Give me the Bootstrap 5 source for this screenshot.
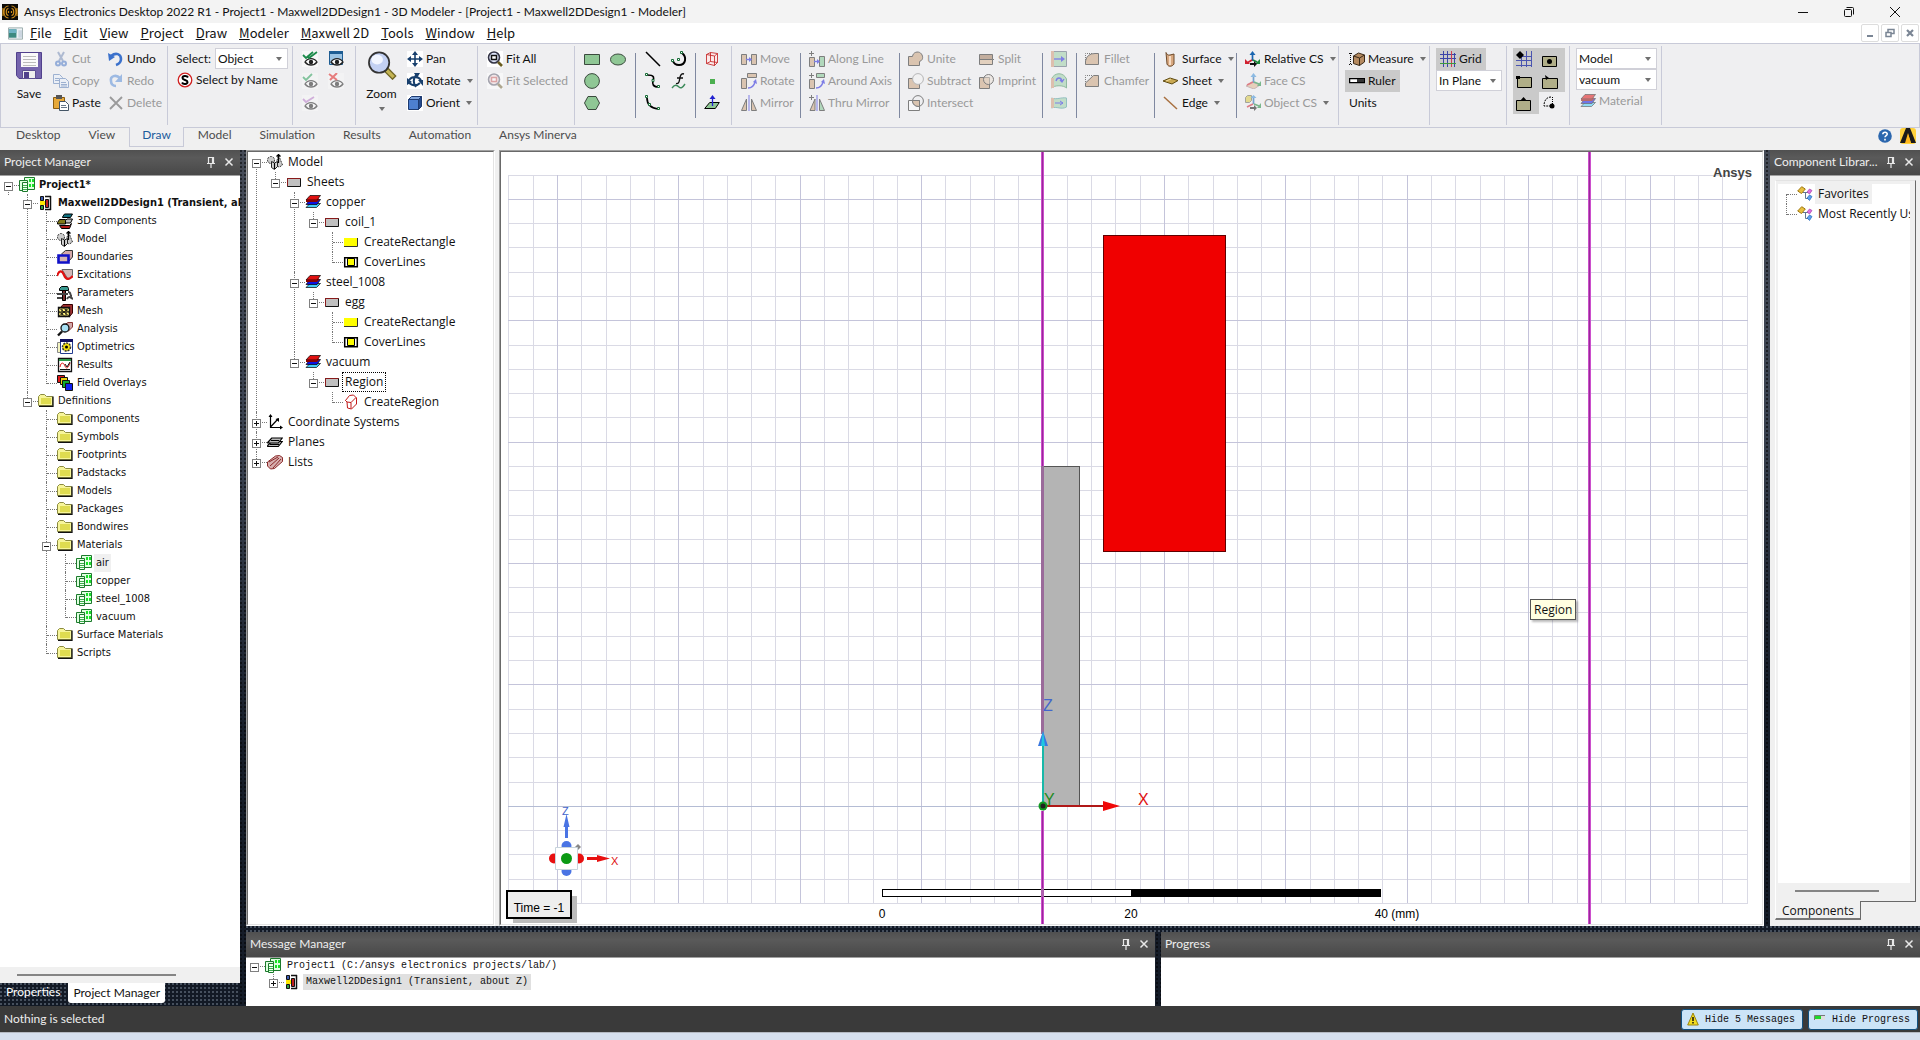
<!DOCTYPE html>
<html lang="en">
<head>
<meta charset="utf-8">
<meta name="viewport" content="width=device-width, initial-scale=1">
<title>Ansys Electronics Desktop 2022 R1</title>
<link href="https://cdn.jsdelivr.net/npm/bootstrap@5.3.0/dist/css/bootstrap.min.css" rel="stylesheet">
<style>
:root{--ui:Lato,"Open Sans",sans-serif;--line:#c8cad8}
body{font:12px/18px var(--ui);color:#111;background:#f0f0f0;height:100vh;overflow:hidden}
button,select{font:inherit;color:inherit}
button{background:none;border:0;padding:0;text-align:left;white-space:nowrap}
svg{display:block;flex:none}
.ic{width:16px;height:16px}
a{color:inherit;text-decoration:none}
/* title and menu */
.titlebar{height:23px;background:#f3f3f3;padding:0 18px 0 2px;gap:6px}
.winbtns{gap:32px}
.menubar{height:20px;background:#fff;padding:0 1px 0 8px;font:13px/18px "Noto Sans CJK SC","Open Sans",sans-serif}
.menus{gap:12px;padding-left:7px}
.mdi{gap:2px}
.mdi button{width:18px;height:18px;border:1px solid #ddd;border-radius:2px;display:grid;place-items:center}
/* ribbon */
.ribbon{border:1px solid var(--line);background:#efeff1;height:85px}
.grp{display:grid;margin:2px 0;padding-top:2px;border-right:1px solid var(--line);align-content:start;box-sizing:content-box}
.rcol{display:flex;flex-direction:column;align-items:flex-start;min-width:0}
.pl8{padding-left:8px}.pl9{padding-left:9px}
.pbox{padding:0 4px 0 6px}
.rb{height:22px;display:flex;align-items:center;gap:3px}
.rb.dis{color:#999}.rb.dis svg{opacity:.55}
.big{display:flex;flex-direction:column;align-items:center;padding-top:3px}
.big span{line-height:27px}
.caret::after,.pick::after{content:"";border:3px solid transparent;border-top:4px solid #707070;border-bottom:0;margin-left:3px}
.big.caret::after{margin:0}
.vsep{width:1px;height:65px;margin-top:5px;background:#7f88a0}
.pick{position:relative;display:block;height:21px}
.pick::after{position:absolute;right:6px;top:9px;pointer-events:none}
.pick select{appearance:none;width:100%;height:100%;border:1px solid #d0d0d8;background:#fff;padding:0 0 0 2px;border-radius:0;display:block}
.on{background:#cacaca}
.g-clip{grid-template-columns:52px 55px 59px}
.g-sel{grid-template-columns:124px}
.g-vis{grid-template-columns:35px 27px}
.g-zoom{grid-template-columns:51px 70px}
.g-fit{grid-template-columns:96px}
.g-prim{grid-template-columns:35px 25px 1px 35px 24px 1px 35px}
.g-edit{grid-template-columns:68px 1px 98px 1px 79px 63px 1px 33px 1px 77px 1px 81px 1px 101px}
.g-meas{grid-template-columns:90px}
.g-grid{grid-template-columns:76px}
.g-snap{grid-template-columns:26px 26px;padding:2px 4px 0 6px}
.g-snap button{width:26px;height:22px;padding-left:3px}
.g-mat{grid-template-columns:91px}
.rtabs{height:22px;color:#4d4d4d;padding-left:2px}
.rtabs button{padding:0 14px;height:19px;line-height:14px;display:flex}
.rtabs .sel{background:#efeff1;border:1px solid var(--line);border-top:0;color:#1b5c9c;padding:1px 12px 0;margin-top:-1px;height:20px}
/* docking area */
.dock{min-height:0;background-color:#151c28;background-image:radial-gradient(circle at 1px 1px,#0008 1px,transparent 1px),linear-gradient(#454b57,#3a4250 35%,#151c28 70%);background-size:4px 4px,100% 100%}
.work{margin-left:6px;min-width:0}
.hsplit{height:6px}
.hsplit,.tabstrip{background:#121925 radial-gradient(circle at 1px 1px,#46505e 1px,transparent 1px) 0 0/4px 4px}
.tabstrip{height:23px;gap:8px;padding-left:6px}
.side{width:240px}
.lib{width:150px;margin-left:6px;background:#f0f0f0}
.phead{height:26px;background:linear-gradient(#505050,#5a5a5a 30%,#484848);border-bottom:1px solid #a0a0a0;color:#eee;padding:0 2px 1px 4px}
.phead .ttl{flex:1;white-space:nowrap}
.phead .ic{width:18px}
.sunk{border:1px solid #a0a0a0;border-right-color:#fff;border-bottom-color:#fff}
.sunk>.in{border:1px solid #696969;border-right-color:#e3e3e3;border-bottom-color:#e3e3e3;background:#fff;overflow:hidden}
.mtree{width:249px}
.gap-bar{width:4px;background:#f0f0f0}
.thumb{height:2px;background:#858585}
.hscroll{height:16px;background:#f0f0f0;padding:7px 64px 0 17px}
.hscroll.narrow{height:18px;padding:7px 36px 0 19px}
/* trees */
.tree,.tree ul{list-style:none;margin:0;padding:0}
.tree{overflow:hidden}
.tree ul{padding-left:19px}
.tree li{position:relative}
.tree li::before{content:"";position:absolute;left:8px;top:0;bottom:0;border-left:1px dotted #777}
.tree li:last-child::before{bottom:auto;height:calc(var(--rh)/2 + 1px)}
.tree>li:first-child::before{top:calc(var(--rh)/2)}
.tree.solo>li::before{display:none}
.row-t{position:relative;height:var(--rh);display:flex;align-items:center;white-space:nowrap}
.row-t::before{content:"";position:absolute;left:9px;width:10px;top:50%;border-top:1px dotted #777}
.tg{position:relative;flex:none;width:9px;height:9px;margin:2px 6px 0 4px;border:1px solid #808080;background:linear-gradient(#111,#111) center/5px 1px no-repeat #fff}
.tg.plus{background:linear-gradient(#111,#111) center/5px 1px no-repeat,linear-gradient(#111,#111) center/1px 5px no-repeat,#fff}
.leaf{flex:none;width:19px}
.row-t span{margin-left:2px;padding:0 3px;line-height:var(--rh)}
.row-t .hl{background:#f0f0f0}
.row-t .foc{outline:1px dotted #000;outline-offset:-1px}
.t-proj{--rh:18px;font-family:"DejaVu Sans Condensed","DejaVu Sans",sans-serif;font-size:11px}
.t-proj .row-t span{padding:0 2px}
.t-model{--rh:20px;font-family:"Open Sans","Noto Sans",sans-serif}
.t-msg{--rh:16px;font-family:"Liberation Mono",monospace;font-size:10px}
.t-msg .row-t span{margin-left:3px}
.t-msg .row-t .hl{background:#e0e0e0}
.ptab{height:20px;background:#fff;border-radius:0 0 3px 3px;padding:0 5px}
.libframe{margin:4px 4px 0 5px;border-left:1px solid #fff;border-top:1px solid #e3e3e3;border-right:1px solid #696969}
.libtree{margin:3px 5px 0 2px;background:#fff}
.libfoot{height:25px}
.libtab{border:1px solid #fff;border-right-color:#696969;border-bottom:2px solid #777;border-top:0;height:19px;padding:2px 6px 0;margin-left:5px;font:12px/16px "Open Sans",sans-serif}
.libedge{border-top:1px solid #696969;height:2px;margin-right:4px}
.bottom{height:74px}
.progress-pane{width:759px;margin-left:6px}
.status{height:26px;background:#3a3a3a;color:#eee;padding:0 2px 0 4px}
.stbtns{gap:5px}
.stbtn{height:21px;border:1px solid #11507f;border-radius:3px;background:#cce4f7;color:#111;font:10px "Liberation Mono",monospace;padding:0 7px 0 5px;display:flex;align-items:center;gap:6px}
.strip{height:8px;background:#d6dfee;border-top:1px solid #b5b9c2}
.tip{position:absolute;left:1029px;top:447px;border:1px solid #555;background:#ffffe1;padding:0 3px;font-family:"Open Sans",sans-serif;line-height:19px;box-shadow:2px 2px 2px #0004}
.scene text{font-family:"Liberation Sans",sans-serif}
</style>
<script src="https://cdn.jsdelivr.net/npm/bootstrap@5.3.0/dist/js/bootstrap.bundle.min.js"></script>
</head>
<body class="d-flex flex-column">

<svg width="0" height="0" class="position-absolute" aria-hidden="true"><defs>
<symbol id="app" viewBox="0 0 16 16"><path fill="#0c0a06" d="M0 0h16v16H0z"/><g fill="none" stroke="#c98a1b" stroke-width="1.200"><path d="M6.500 2C.5 2 .5 14 6.500 14M9.500 2c6 0 6 12 0 12M6.500 4.500c-3 0-3 7 0 7M9.500 4.500c3 0 3 7 0 7M6.500 7v2M9.500 7v2M1 4v8M15 4v8"/></g></symbol>
<symbol id="doc" viewBox="0 0 16 13"><path fill="#eef3f6" stroke="#9aa" d="M.5.5h15v12H.5z"/><path fill="#3d8a80" d="M1 2h8v9H1z"/><path fill="#6fb3c4" d="M1 2h8v4H1z"/><path fill="#ccd6e0" d="M11 3h4v8h-4z"/></symbol>
<symbol id="save" viewBox="0 0 26 27"><path fill="#7564ad" stroke="#51418c" d="M.5.5h25v26H3l-2.500-3z"/><path fill="#fafafa" d="M5 1h17v14H5z"/><path stroke="#bbb" d="M7 4.500h13M7 7.500h13M7 10.500h13M7 13.500h13"/><path fill="#eee" stroke="#5d4f92" d="M6.500 18.500h13v8h-13z"/><path fill="#51418c" d="M8 20h5v6H8z"/></symbol>
<symbol id="cut" viewBox="0 0 16 16"><path stroke="#7a8fb8" stroke-width="2" d="M5 1l5 9M11 1L6 10"/><g fill="none" stroke="#4d79c7" stroke-width="2"><circle cx="5" cy="12.500" r="2"/><circle cx="11" cy="12.500" r="2"/></g></symbol>
<symbol id="copy" viewBox="0 0 16 16"><path fill="#e8f0fb" stroke="#5b7fb8" d="M.5 1.500h6l3 3v6h-9z"/><path fill="#e8f0fb" stroke="#5b7fb8" d="M6.500 5.500h6l3 3v6h-9z"/><path stroke="#5b7fb8" d="M2 5.500h4M2 7.500h4M8 9.500h5M8 11.500h6M8 13h6"/></symbol>
<symbol id="paste" viewBox="0 0 16 16"><path fill="#e7a93a" stroke="#8a5d12" d="M.5 2.500h11v11H.5z"/><path fill="#555" d="M3 0h6v4H3z"/><path fill="#fff" stroke="#456" d="M6.500 6.500h6l3 3v6h-9z"/><path stroke="#678" d="M8 10.500h5M8 12.500h6"/></symbol>
<symbol id="undo" viewBox="0 0 16 16"><path fill="none" stroke="#3c72cc" stroke-width="2.600" d="M3 5c5-4 10-2 10 3 0 3-2 5-5 6"/><path fill="#3c72cc" d="M0 2l1 8 6-4z"/></symbol>
<symbol id="redo" viewBox="0 0 16 16"><path fill="none" stroke="#5b8fd8" stroke-width="2.600" d="M12 5C8 1 2 3 3 8c0 3 2 5 5 5"/><path fill="#5b8fd8" d="M14 1v8H7z"/></symbol>
<symbol id="del" viewBox="0 0 16 16"><path stroke="#555" stroke-width="1.800" d="M2 2l12 12M14 2L2 14"/></symbol>
<symbol id="selname" viewBox="0 0 16 16"><circle cx="8" cy="8" r="6.800" fill="#fff" stroke="#d02020" stroke-width="1.300"/><path fill="none" stroke="#000" stroke-width="2" d="M11 5.500C10 3.500 5.500 3.500 5.500 6S10.500 7.500 10.500 10 6 12.500 5 10.500"/></symbol>
<symbol id="eye" viewBox="0 0 16 16"><path fill="#fff" stroke="#222" stroke-width="1.300" d="M3 11c3-4.500 9-4.500 12 0-3 4-9 4-12 0z"/><circle cx="9" cy="11" r="2.200" fill="#222"/></symbol>
<symbol id="eyeg" viewBox="0 0 16 16"><path fill="#f7f7f7" d="M0 0h16v16H0z"/><use href="#eye"/><path fill="none" stroke="#1b8a4a" stroke-width="1.800" d="M1 4l3 3 7-6M5 5l2 2 8-6"/></symbol>
<symbol id="eyew" viewBox="0 0 16 16"><path fill="#9cc4e4" stroke="#1e5d93" d="M1.500.5h13v13h-13z"/><path fill="#1e5d93" d="M1 0h14v3H1z"/><use href="#eye"/></symbol>
<symbol id="eyec" viewBox="0 0 16 16"><path fill="#f7f7f7" d="M0 0h16v16H0z"/><use href="#eye"/><path fill="none" stroke="#2aa05a" stroke-width="1.800" d="M1 4l3 3 6-6"/></symbol>
<symbol id="eyex" viewBox="0 0 16 16"><path fill="#f7f7f7" d="M0 0h16v16H0z"/><use href="#eye"/><path stroke="#e02020" stroke-width="2" d="M1 1l8 6M9 0L2 7"/></symbol>
<symbol id="eyep" viewBox="0 0 16 16"><path fill="#f7f7f7" d="M0 0h16v16H0z"/><use href="#eye"/><path fill="none" stroke="#b87bc8" stroke-width="1.800" d="M1 4l3 3 8-5"/></symbol>
<symbol id="zoomi" viewBox="0 0 30 30"><path stroke="#6e6424" stroke-width="6" d="M18 18l10 10"/><path stroke="#c4b454" stroke-width="3.500" d="M20 20l7 7"/><circle cx="12" cy="12" r="10.500" fill="#c3d1f3" stroke="#333" stroke-width="1.800"/><ellipse cx="10" cy="9" rx="6" ry="5" fill="#f2f6ff"/></symbol>
<symbol id="pan" viewBox="0 0 16 16"><path fill="#fff" d="M0 0h16v16H0z"/><path stroke="#173f6d" stroke-width="1.600" d="M8 2v12M2 8h12"/><path fill="#173f6d" d="M8 0l3 4H5zM8 16l3-4H5zM0 8l4-3v6zM16 8l-4-3v6z"/></symbol>
<symbol id="rot" viewBox="0 0 16 16"><path fill="#fff" d="M0 0h16v16H0z"/><path fill="none" stroke="#173f6d" stroke-width="2" d="M2 7c3-4 9-4 12 0M9 2c-3 4-3 8 0 12M2 10c4 3 8 3 11 0"/><path fill="#173f6d" d="M0 5l5 4-5 3zM7 0h6l-3 5zM11 7h5v6z"/></symbol>
<symbol id="cube" viewBox="0 0 16 16"><path fill="#fff" d="M0 0h16v16H0z"/><path fill="#7fa4dc" stroke="#1d3a70" d="M1.500 4.500l3-3h10l-3 3z"/><path fill="#24498c" stroke="#1d3a70" d="M11.500 4.500l3-3v10l-3 3z"/><path fill="#4d7fd0" stroke="#1d3a70" d="M1.500 4.500h10v10h-10z"/></symbol>
<symbol id="fit" viewBox="0 0 16 16"><path fill="#fff" d="M0 0h16v16H0z"/><circle cx="7" cy="6.500" r="5.500" fill="#dfe6fb" stroke="#334" stroke-width="1.600"/><path fill="#fff" stroke="#111" stroke-width="1.500" d="M4.500 4.500h5v4h-5z"/><path stroke="#6a5c20" stroke-width="2.600" d="M11 11l4 4"/></symbol>
<symbol id="fits" viewBox="0 0 16 16"><path fill="#fff" d="M0 0h16v16H0z"/><circle cx="7" cy="6.500" r="5.500" fill="#f4dfe2" stroke="#667" stroke-width="1.600"/><path fill="#fff" stroke="#c66" stroke-width="1.500" d="M4.500 4.500h5v4h-5z"/><path stroke="#7a6c40" stroke-width="2.600" d="M11 11l4 4"/></symbol>
<symbol id="rect" viewBox="0 0 16 16"><path fill="#8fc795" stroke="#3b4a3e" d="M.5 3.500h15v10H.5z"/></symbol>
<symbol id="ell" viewBox="0 0 16 16"><ellipse cx="8" cy="8.500" rx="7.500" ry="5.500" fill="#8fc795" stroke="#3b4a3e"/></symbol>
<symbol id="circ" viewBox="0 0 16 16"><circle cx="8" cy="8" r="7.400" fill="#8fc795" stroke="#3b4a3e"/></symbol>
<symbol id="hex" viewBox="0 0 16 16"><path fill="#8fc795" stroke="#3b4a3e" d="M4 1.500h8l3.500 6.500-3.500 6.500H4L.5 8z"/></symbol>
<symbol id="ln" viewBox="0 0 16 16"><path stroke="#000" stroke-width="1.500" d="M1 1l14 14"/></symbol>
<symbol id="arc3" viewBox="0 0 16 16"><path fill="none" stroke="#000" stroke-width="2" d="M11 2c5 4 4 12-3 12-3 0-5-1-6-4"/><path fill="#fff" stroke="#156a35" d="M9.500.5h2v2h-2zM.5 8.500h2v2h-2zM6.500 7.500h2v2h-2z"/></symbol>
<symbol id="spl" viewBox="0 0 16 16"><path fill="none" stroke="#000" stroke-width="1.700" d="M2 2c8 0 7 3 6 6s0 6 6 6"/><path fill="#fff" stroke="#156a35" d="M.5.5h2v2h-2zM7 6.500h2v2H7zM12.500 12.500h2v2h-2z"/></symbol>
<symbol id="arcc" viewBox="0 0 16 16"><path fill="none" stroke="#000" stroke-width="1.700" d="M2 3c0 6 4 10 11 11"/><path fill="#fff" stroke="#156a35" d="M.5.5h2v2h-2zM3.500 8.500h2v2h-2zM12.500 12.500h2v2h-2z"/></symbol>
<symbol id="eqn" viewBox="0 0 16 16"><path fill="none" stroke="#111" stroke-width="1.400" d="M13 1c-3-1-4 2-4.500 6C8 10 7 11 5 10.500M6 5h6"/><path fill="none" stroke="#3c8a5a" stroke-width="1.400" d="M1 15c3-4 5-3 7-1s4 0 6-3"/></symbol>
<symbol id="regn" viewBox="0 0 16 16"><path fill="#fbe9e9" stroke="#c01818" stroke-width=".8" d="M2.500 3.500l4-2 7 1v9l-3 3-8-2zM2.500 3.500l8 1.500v9.500M10.500 5l3-2.500M2.500 12.500l4-2 7 1M6.500 1.500v9"/></symbol>
<symbol id="regt" viewBox="0 0 16 16"><path fill="#fff" stroke="#c01818" d="M2.500 6.500l4-5 4-.500 3 3v6l-5 5-4-1-.500-6zM4 8l4 .5v6M8 8.500l5-5M2.500 6.500L4 8"/></symbol>
<symbol id="pnt" viewBox="0 0 16 16"><path fill="#4caf50" d="M6 6h5v5H6z"/></symbol>
<symbol id="plane" viewBox="0 0 16 16"><path fill="#8fc795" stroke="#000" d="M.7 13.500l5-6h9.600l-4 6z"/><path stroke="#2222d0" stroke-width="1.300" d="M8.500 2v9"/><path fill="#2222d0" d="M8.500 0l3 4h-6z"/></symbol>
<symbol id="mv" viewBox="0 0 16 16"><path fill="#c9a27c" stroke="#222" d="M.5 3.500h5v10h-5zM10.500 3.500h5v10h-5z"/><path stroke="#22d" stroke-width="1.400" d="M5 8.500h4"/><path fill="#22d" d="M8 6l3 2.500L8 11z"/></symbol>
<symbol id="ro" viewBox="0 0 16 16"><path fill="#c9a27c" stroke="#222" d="M.5 5.500h5v10h-5zM6.500.5h9v4h-9z"/><path fill="none" stroke="#22d" stroke-width="1.400" d="M7 15c4 0 6-2 7-6"/><path fill="#22d" d="M12 9l3-3 1 5z"/></symbol>
<symbol id="mi" viewBox="0 0 16 16"><path fill="#c9a27c" stroke="#222" d="M5.500 4v11.500h-5zM10.500 4v11.500h5z"/><path stroke="#22d" d="M8 0v16"/></symbol>
<symbol id="mv2" viewBox="0 0 16 16"><path fill="#c9a27c" stroke="#222" d="M.5 6.500h5v9h-5z"/><path fill="#7fc792" stroke="#222" d="M10.500 5.500h5v10h-5z"/><path stroke="#22d" stroke-width="1.400" d="M5 10.500h4"/><path fill="#22d" d="M8 8l3 2.500L8 13z"/><path stroke="#222" d="M2.500 0v5M0 2.500h5"/></symbol>
<symbol id="ro2" viewBox="0 0 16 16"><path fill="#c9a27c" stroke="#222" d="M.5 6.500h5v9h-5z"/><path fill="#7fc792" stroke="#222" d="M7.500.5h8v4h-8z"/><path fill="none" stroke="#22d" stroke-width="1.400" d="M7 15c4 0 6-2 7-6"/><path fill="#22d" d="M12 9l3-3 1 5z"/><path stroke="#222" d="M2.500 0v5M0 2.500h5"/></symbol>
<symbol id="mi2" viewBox="0 0 16 16"><path fill="#c9a27c" stroke="#222" d="M6 4v11.500H1z"/><path fill="#7fc792" stroke="#222" d="M10.500 4v11.500h5z"/><path stroke="#22d" d="M8 0v16"/><path stroke="#222" d="M2.500 0v5M0 2.500h5"/></symbol>
<symbol id="uni" viewBox="0 0 16 16"><path fill="#c9a27c" stroke="#222" d="M.5 5.500h4C5 1 10 0 12.500 2S16 9 11.500 10.500v4H.5z"/></symbol>
<symbol id="subt" viewBox="0 0 16 16"><path fill="#c9a27c" stroke="#222" d="M.5 5.500h11v10H.5z"/><circle cx="10" cy="6" r="5.400" fill="#f4f4f4" stroke="#888"/></symbol>
<symbol id="inter" viewBox="0 0 16 16"><path fill="#fff" stroke="#222" d="M.5 5.500h11v10H.5z"/><circle cx="10" cy="6" r="5.400" fill="none" stroke="#222"/><path fill="#c9a27c" stroke="#222" d="M4.500 5.500h7v6c-4 0-7-2-7-6z"/></symbol>
<symbol id="split" viewBox="0 0 16 16"><path fill="#a07a5c" stroke="#222" d="M.5 3.500h13v5H.5z"/><path fill="#d9b795" stroke="#222" d="M.5 8.500h13v5H.5z"/><path stroke="#222" stroke-dasharray="1 1" d="M0 8.500h16"/></symbol>
<symbol id="impr" viewBox="0 0 16 16"><path fill="#c9a27c" stroke="#222" d="M.5 4.500h10v11H.5z"/><circle cx="9.500" cy="6.500" r="5" fill="#e8d4c0" fill-opacity=".5" stroke="#222"/></symbol>
<symbol id="sw1" viewBox="0 0 16 16"><path fill="#9cd0a8" stroke="#567" d="M.5.5h15v15H.5z"/><path fill="#d09878" d="M0 0h3v16H0z"/><path stroke="#22d" stroke-width="1.300" d="M3 8h9"/><path fill="#22d" d="M10 5l4 3-4 3z"/></symbol>
<symbol id="sw2" viewBox="0 0 16 16"><path fill="#9cd0a8" stroke="#469060" d="M.5 6c3-7 12-7 15 0v9c-3-3-12-3-15 0z"/><path fill="#d09878" d="M0 5h3v10H0z"/><path fill="none" stroke="#22d" stroke-width="1.300" d="M5 8c1-4 5-4 6 0M9 7l2 2 2-3"/></symbol>
<symbol id="sw3" viewBox="0 0 16 16"><path fill="#9cd0a8" stroke="#4a9a9a" d="M.5 3c5 2 10-1 15 0v9c-5 3-10-1-15 1z"/><path fill="#d09878" d="M0 3h3v10H0z"/><path fill="none" stroke="#22d" d="M4 8h8M9 6l3 2-3 2"/></symbol>
<symbol id="fil" viewBox="0 0 16 16"><path fill="#c9a27c" stroke="#222" d="M.5 13.500V10Q2 2.500 10 2.500h3.500v11z"/><path fill="none" stroke="#222" stroke-dasharray="1 1" d="M.5 9V2.500H8"/></symbol>
<symbol id="cha" viewBox="0 0 16 16"><path fill="#c9a27c" stroke="#222" d="M.5 13.500V10l8-7.500h5v11z"/><path fill="none" stroke="#222" stroke-dasharray="1 1" d="M.5 9V2.500H8"/></symbol>
<symbol id="surf" viewBox="0 0 16 16"><path fill="#d8a880" stroke="#6d4a2a" d="M3 1.500c1 2 2 3 4 2.500l4-1v10c-2 3-6 3-7 0z"/><path fill="#f6dcc4" d="M6 5h2v9H6z"/></symbol>
<symbol id="sheet" viewBox="0 0 16 16"><path fill="#c9a852" stroke="#5e4a12" d="M0 8l7-3 8 2.500L9 11z"/><path stroke="#f0dca0" d="M3 8l5-2"/></symbol>
<symbol id="edge" viewBox="0 0 16 16"><path stroke="#a87040" stroke-width="1.500" d="M1 2l13 12"/></symbol>
<symbol id="rcs" viewBox="0 0 16 16"><path stroke="#1a66b0" stroke-width="1.700" d="M7.500 2v8"/><path fill="#1a66b0" d="M7.500 0l3 4h-6z"/><path stroke="#d02030" stroke-width="1.700" d="M7 9l-5 3"/><path fill="#d02030" d="M0 8v5h5z"/><path stroke="#1b8a3a" stroke-width="1.700" d="M8 9l4 2"/><path fill="#1b8a3a" d="M15 8v5h-5z"/><path fill="#111" d="M5 12h4v-2l3 3-3 3v-2H5z"/></symbol>
<symbol id="fcs" viewBox="0 0 16 16"><path fill="#e0b890" stroke="#a88" d="M1 13l6-4 8 3-6 4z"/><path stroke="#1a66b0" stroke-width="1.700" d="M8.500 2v8"/><path fill="#3c90d8" d="M8.500 0l3 4h-6z"/><path stroke="#d02030" stroke-width="1.700" d="M8 9l-6 3"/><path stroke="#1b8a3a" stroke-width="1.700" d="M9 9l5 2"/><path fill="#1b8a3a" d="M16 8v5h-4z"/></symbol>
<symbol id="ocs" viewBox="0 0 16 16"><path fill="#d8c840" stroke="#665" d="M.5 2.500l2-2h4v5l-2 2h-4z"/><path stroke="#1a66b0" stroke-width="1.700" d="M8.500 2v7"/><path fill="#3c90d8" d="M8.500 0l3 3h-6z"/><path stroke="#d02030" stroke-width="1.700" d="M8 9l-6 3"/><path stroke="#1b8a3a" stroke-width="1.700" d="M9 9l5 2"/><path fill="#1b8a3a" d="M16 8v5h-4z"/><path fill="#111" d="M5 12h4v-2l3 3-3 3v-2H5z"/></symbol>
<symbol id="meas" viewBox="0 0 16 16"><path stroke="#111" stroke-dasharray="1 1" d="M1.500 2v12M0 2.500h4M0 13.500h4"/><path fill="#b58a60" stroke="#3a2a18" d="M4.500 5l5-3 6 2v7l-5 3.500-6-2z"/><path fill="none" stroke="#3a2a18" d="M4.500 5l6 2v7.500M10.500 7l5-3"/></symbol>
<symbol id="ruler" viewBox="0 0 16 16"><path fill="#fff" stroke="#000" stroke-width="1.300" d="M.6 5.600h14.800v4H.6z"/><path fill="#333" d="M8 6h7v3H8z"/></symbol>
<symbol id="gridi" viewBox="0 0 16 16"><path stroke="#3b45a8" d="M3.500 0v16M7.500 0v16M14.500 2v14M0 3.500h16M0 7.500h16"/><path stroke="#d04050" d="M11.500 0v16"/><path stroke="#3b9a3b" d="M0 12.500h16"/></symbol>
<symbol id="sn1" viewBox="0 0 16 16"><path stroke="#4a54b0" d="M5.500 6v10M10.500 0v16M15.500 0v16M6 5.500h10M0 9.500h16M0 14.500h16"/><path fill="#000" d="M4 0l4 4-4 4-4-4z"/></symbol>
<symbol id="sn2" viewBox="0 0 16 16"><path fill="#b0ae88" stroke="#000" d="M.5 5.500h14v10H.5z"/><circle cx="7.500" cy="10.500" r="2.500"/></symbol>
<symbol id="sn3" viewBox="0 0 16 16"><path fill="#b0ae88" stroke="#000" d="M1.500 4.500h14v10h-14z"/><path d="M0 3h4v3H0z"/></symbol>
<symbol id="sn4" viewBox="0 0 16 16"><path fill="#b0ae88" stroke="#000" d="M.5 5.500h15v10H.5z"/><path d="M3 2l4 3-3 2z"/></symbol>
<symbol id="sn5" viewBox="0 0 16 16"><path fill="#b0ae88" stroke="#000" d="M.5 5.500h14v10H.5z"/><path d="M7.500 2l3.500 4H4z"/></symbol>
<symbol id="sn6" viewBox="0 0 16 16"><path fill="none" stroke="#000" stroke-dasharray="2 1" d="M9 2C5 2 2 5 2 11h6"/><circle cx="10" cy="11" r="2.500"/><path stroke="#000" stroke-dasharray="1 1" d="M10.500 2v9"/></symbol>
<symbol id="stk" viewBox="0 0 16 16"><path fill="#44ccf4" stroke="#000" stroke-width=".7" d="M1 13.500l4-4h10.500l-4 4z"/><path fill="#0a12e0" stroke="#000" stroke-width=".7" d="M1 10.500l4-5h10.500l-3.500 5z"/><path fill="#e01010" stroke="#000" stroke-width=".7" d="M1 6l4-4.500h10.500L12 6z"/><path fill="#800" d="M1 6h11l2-2v2l-2 2H1z"/></symbol>
<symbol id="help" viewBox="0 0 14 14"><circle cx="7" cy="7" r="6.800" fill="#2b67ae"/><path fill="none" stroke="#fff" stroke-width="1.600" d="M4.800 5.300C5 2.500 9.500 2.700 9.200 5.200 9 6.600 7 6.600 7 8.300M7 9.800v1.600"/></symbol>
<symbol id="alogo" viewBox="0 0 16 16"><rect width="16" height="16" rx="3" fill="#ffd23c"/><path fill="#1a1a1a" d="M0 15L6 0h4L6 15z"/><path fill="#1a1a1a" d="M16 15L10 0H6l5 15z"/><path fill="#ffb71b" d="M8 5l3 10H5z"/></symbol>
<symbol id="pin" viewBox="0 0 18 16"><path fill="none" stroke="#e8e8e8" stroke-width="1.200" d="M6.500 3.500h5v6h-5zM5 9.500h8M9 10v4M10.500 4v5"/></symbol>
<symbol id="x" viewBox="0 0 18 16"><path stroke="#e8e8e8" stroke-width="1.500" d="M5.500 4.500l7 7M12.500 4.500l-7 7"/></symbol>
<symbol id="prj" viewBox="0 0 16 16"><path fill="#dfffe0" stroke="#1c7a2c" d="M5.500.5h10v12h-10z"/><path fill="#dfffe0" stroke="#1c7a2c" d="M.5 3.500h8v10h-8z"/><path fill="#f2fff2" stroke="#1c7a2c" d="M3.500 5.500h5v9h-5z"/><path stroke="#3cae4c" d="M4 8.500h4M4 10.500h4M4 12.500h4"/><path stroke="#18e028" stroke-width="2" d="M11 2v3M14 2v3M11 7v3M14 7v3"/></symbol>
<symbol id="dsn" viewBox="0 0 16 16"><path fill="#3c5cb0" stroke="#111" d="M2.500 1.500h3v4h-3z"/><path fill="#ffe800" d="M2 6h5v4H2z"/><path fill="#2f9a3c" stroke="#111" d="M2.500 10.500h3v4h-3z"/><path fill="#fff" stroke="#111" stroke-width="1.500" d="M7 1.500h6M12.500 1v14M7 14.500h6"/><path fill="#c02020" stroke="#111" d="M7.500 4.500h3v8h-3z"/></symbol>
<symbol id="c3d" viewBox="0 0 16 16"><path fill="#107080" stroke="#000" d="M5.500 4l2-3h8l-2 3.500h-8z"/><path fill="#807818" stroke="#000" d="M.5 9.500l2-3h6v4.500H.5z"/><path fill="#bbb" stroke="#000" d="M8.500 7.500l1.500-1.500h5.500l-2 4h-5z"/><path fill="#b01818" stroke="#000" d="M2.500 12.500h10l2-2-2 5h-8z"/></symbol>
<symbol id="mdl" viewBox="0 0 16 16"><circle cx="4" cy="6" r="3.500" fill="#ccc" stroke="#333" stroke-dasharray="2 1"/><path fill="#ccc" stroke="#333" stroke-dasharray="2 1" d="M11.500 1l4 10-3 2-4-1z"/><path fill="#d8d8d8" stroke="#222" d="M4.500 7.500l3 1.500 3-1.500v5l-3 3-3-2z"/><path fill="none" stroke="#000" stroke-width="1.200" d="M11.500 0v9M7.500 9v6M9.500 2.500l2-2 2 2"/></symbol>
<symbol id="bnd" viewBox="0 0 16 16"><path fill="#d4a8a8" stroke="#333" d="M4.500 5l4-3.500h7V8L12 12z"/><path fill="#d4b4b4" stroke="#1010c8" stroke-width="2.600" d="M1.500 6.500h10v7h-10z"/></symbol>
<symbol id="exc" viewBox="0 0 16 16"><path fill="#d0b8b8" stroke="#666" d="M5 2.500h10.500V8l-4 5z"/><path fill="none" stroke="#e01010" stroke-width="2.200" d="M0 9c2-6 5-6 7-1s5 5 9 1"/></symbol>
<symbol id="par" viewBox="0 0 16 16"><path fill="#3a9a90" stroke="#000" d="M2.500 3.500l2-2h6l1 2v2h-9z"/><path fill="#7a3030" stroke="#000" d="M5.500 5.500h3v10h-3z"/><path fill="none" stroke="#444" stroke-width="2" d="M0 9h11M0 13h5M11 7c4 0 1 4 4 4M10 14c2-4 4-1 6 0"/></symbol>
<symbol id="msh" viewBox="0 0 16 16"><path fill="#a03030" stroke="#300" d="M4 4l2-2.500h9.500V10L13 13z"/><path fill="#fff27a" stroke="#111" stroke-width="1.400" d="M1.500 4.500h11v9h-11z"/><path fill="none" stroke="#111" stroke-width=".9" d="M1 9h12M5 4v10M9 4v10M1 4l12 10M13 4L1 14M5 4l8 6M1 8l8 6"/></symbol>
<symbol id="ana" viewBox="0 0 16 16"><path fill="#d0a8a8" stroke="#833" d="M6 5l5-3.500h4.500V6l-4 4z"/><circle cx="8" cy="7" r="4" fill="#a8e0f4" stroke="#111" stroke-width="1.300"/><path stroke="#111" stroke-width="2.400" d="M5 10.500l-4 4"/></symbol>
<symbol id="opt" viewBox="0 0 16 16"><path fill="#f4f4c0" stroke="#888" d="M.5 3.500h9v10h-9z"/><path fill="#fff" stroke="#223c90" d="M3.500.5h12v14h-12z"/><path fill="#101060" d="M3 0h13v3H3z"/><circle cx="9.500" cy="8" r="4" fill="#f4e010" stroke="#333" stroke-dasharray="2 1" stroke-width="1.500"/><circle cx="9.500" cy="8" r="1.500"/></symbol>
<symbol id="res" viewBox="0 0 16 16"><path fill="#fff" stroke="#111" stroke-width="1.300" d="M1.500 1.500h13v13h-13z"/><path fill="#2c9a4a" d="M2 2h12v2H2z"/><path fill="none" stroke="#e01010" d="M3 10c1-6 4-4 5-1s3 3 5-3"/><path fill="none" stroke="#111" d="M8 7l2 3 3-5M3 12.500h10"/></symbol>
<symbol id="fld" viewBox="0 0 16 16"><path fill="#e01818" stroke="#111" d="M.5.5h7v7h-7z"/><path fill="#f0d010" stroke="#111" d="M3.500 2.500h7v7h-7z"/><path fill="#10a830" stroke="#111" d="M5.500 5.500h7v7h-7z"/><path fill="#1020f0" stroke="#111" d="M8.500 8.500h7v7h-7z"/></symbol>
<symbol id="fol" viewBox="0 0 16 16"><path fill="#f7f59a" stroke="#8c8c40" d="M.5 12.500V3.500l2-2h4l2 2h6v9z"/><path fill="#dfdc50" d="M3 5h10v6H3z"/><path fill="none" stroke="#111" stroke-width="1.300" d="M1 13.300h14V3.500"/></symbol>
<symbol id="shp" viewBox="0 0 16 16"><path fill="#c0c0c0" stroke="#111" d="M1.500 4.500h13v8h-13z"/><path fill="none" stroke="#8a1a1a" d="M1.500 12V4.500h13"/></symbol>
<symbol id="crc" viewBox="0 0 16 16"><path fill="#ffff00" d="M1 4h14v8H1z"/><path fill="none" stroke="#333" d="M1 12.500h13.500V4"/></symbol>
<symbol id="cov" viewBox="0 0 16 16"><path fill="#fff" stroke="#000" stroke-width="1.500" d="M1.700 3.700h12.600v9H1.700z"/><path fill="#ffff00" stroke="#000" d="M4.500 4.500h7v7h-7z"/></symbol>
<symbol id="csy" viewBox="0 0 16 16"><path fill="none" stroke="#000" stroke-width="1.200" d="M3.500 1v12.500H15M3.500 13L11 5"/><path d="M3.500 0l2 3h-4zM16 13.500l-3-2v4zM12 4v4L8.500 5z"/></symbol>
<symbol id="pln" viewBox="0 0 16 16"><path fill="#bbb" stroke="#000" stroke-width="1.200" d="M.7 11.500l4-4h10.600l-4 5H.7z"/><path fill="#bbb" stroke="#000" stroke-width="1.200" d="M.7 8.500l4-4.500h10.600l-4 5H.7z"/><path stroke="#000" d="M4 6.500h8M3 10.500h9"/></symbol>
<symbol id="lst" viewBox="0 0 16 16"><path fill="#d8b0b0" stroke="#801818" stroke-width=".9" d="M.5 12V8l8-6 4-.5 3 2v4l-8 7-4 .5zM3 12l9-8M6 14l8-9M2 8l9-5"/></symbol>
<symbol id="cmp" viewBox="0 0 16 16"><path fill="none" stroke="#607890" d="M6 6.500h6M8.500 6.500v6h3"/><path fill="#e8c040" stroke="#a07810" d="M.7 5l4-4.300L8.300 3 4.500 7.500z"/><path fill="#e070e0" stroke="#a040a8" stroke-width=".7" d="M10 6l2.500-3 2.500 1.500L12.500 8z"/><path fill="#5ca0f0" stroke="#2868b8" stroke-width=".7" d="M10 12l2.500-3 2.500 1.500-2.500 4z"/></symbol>
<symbol id="warn" viewBox="0 0 12 14"><path fill="#f4dc20" stroke="#9a8410" d="M6 1l5.300 12H.7z"/><path stroke="#111" stroke-width="1.500" d="M6 5v4M6 10v1.500"/></symbol>
<symbol id="prg" viewBox="0 0 12 14"><path fill="#ddd" d="M1 4h10v4H1z"/><path fill="none" stroke="#777" d="M.5 8V3.500H11"/><path fill="#20d828" d="M1 4h6v3H1z"/></symbol>
</defs></svg>

<header class="titlebar d-flex align-items-center">
  <svg class="ic"><use href="#app"/></svg><span class="flex-fill">Ansys Electronics Desktop 2022 R1 - Project1 - Maxwell2DDesign1 - 3D Modeler - [Project1 - Maxwell2DDesign1 - Modeler]</span>
  <div class="winbtns d-flex">
    <button aria-label="Minimize"><svg width="14" height="14"><path stroke="#111" d="M2 7.500h10"/></svg></button>
    <button aria-label="Restore"><svg width="14" height="14" fill="none" stroke="#111"><rect x="2.500" y="4.500" width="7" height="7" rx="1"/><path d="M4.500 2.500h6q1 0 1 1v6"/></svg></button>
    <button aria-label="Close"><svg width="14" height="14"><path stroke="#111" d="M2 2l10 10M12 2L2 12"/></svg></button>
  </div>
</header>

<nav class="menubar d-flex align-items-center" aria-label="Menu">
  <svg width="15" height="13"><use href="#doc"/></svg>
  <div class="menus d-flex flex-fill">
    <a href="#"><u>F</u>ile</a><a href="#"><u>E</u>dit</a><a href="#"><u>V</u>iew</a><a href="#"><u>P</u>roject</a><a href="#"><u>D</u>raw</a><a href="#"><u>M</u>odeler</a><a href="#"><u>M</u>axwell 2D</a><a href="#"><u>T</u>ools</a><a href="#"><u>W</u>indow</a><a href="#"><u>H</u>elp</a>
  </div>
  <div class="mdi d-flex">
    <button aria-label="Minimize document"><svg width="10" height="10"><path stroke="#7a8594" stroke-width="2" d="M2 8h6"/></svg></button>
    <button aria-label="Restore document"><svg width="10" height="10" fill="none" stroke="#7a8594" stroke-width="1.500"><path d="M1 4.500h5v4H1zM3 4V1.500h6v4H6"/></svg></button>
    <button aria-label="Close document"><svg width="10" height="10"><path stroke="#7a8594" stroke-width="2.200" d="M2 2l6 6M8 2L2 8"/></svg></button>
  </div>
</nav>

<section class="ribbon d-flex" aria-label="Ribbon">
  <div class="grp g-clip">
    <button class="big ps-1"><svg width="26" height="29"><use href="#save"/></svg><span>Save</span></button>
    <div class="rcol"><button class="rb dis"><svg class="ic"><use href="#cut"/></svg>Cut</button><button class="rb dis"><svg class="ic"><use href="#copy"/></svg>Copy</button><button class="rb"><svg class="ic"><use href="#paste"/></svg>Paste</button></div>
    <div class="rcol"><button class="rb"><svg class="ic"><use href="#undo"/></svg>Undo</button><button class="rb dis"><svg class="ic"><use href="#redo"/></svg>Redo</button><button class="rb dis"><svg class="ic"><use href="#del"/></svg>Delete</button></div>
  </div>
  <div class="grp g-sel">
    <div class="d-flex align-items-center pl8 pe-1"><label for="selmode" class="pe-1">Select:</label><span class="pick flex-fill"><select id="selmode"><option>Object</option></select></span></div>
    <button class="rb pl9"><svg class="ic"><use href="#selname"/></svg>Select by Name</button>
  </div>
  <div class="grp g-vis">
    <div class="rcol pl9"><button class="rb" aria-label="Show all"><svg class="ic"><use href="#eyeg"/></svg></button><button class="rb dis" aria-label="Show selected"><svg class="ic"><use href="#eyec"/></svg></button><button class="rb dis" aria-label="Show only"><svg class="ic"><use href="#eyep"/></svg></button></div>
    <div class="rcol"><button class="rb" aria-label="Visibility dialog"><svg class="ic"><use href="#eyew"/></svg></button><button class="rb dis" aria-label="Hide selected"><svg class="ic"><use href="#eyex"/></svg></button></div>
  </div>
  <div class="grp g-zoom">
    <button class="big caret"><svg width="30" height="29"><use href="#zoomi"/></svg><span>Zoom</span></button>
    <div class="rcol"><button class="rb"><svg class="ic"><use href="#pan"/></svg>Pan</button><button class="rb caret"><svg class="ic"><use href="#rot"/></svg>Rotate</button><button class="rb caret"><svg class="ic"><use href="#cube"/></svg>Orient</button></div>
  </div>
  <div class="grp g-fit"><div class="rcol pl9"><button class="rb"><svg class="ic"><use href="#fit"/></svg>Fit All</button><button class="rb dis"><svg class="ic"><use href="#fits"/></svg>Fit Selected</button></div></div>
  <div class="grp g-prim">
    <div class="rcol pl9"><button class="rb" aria-label="Rectangle"><svg class="ic"><use href="#rect"/></svg></button><button class="rb" aria-label="Circle"><svg class="ic"><use href="#circ"/></svg></button><button class="rb" aria-label="Regular polygon"><svg class="ic"><use href="#hex"/></svg></button></div>
    <div class="rcol"><button class="rb" aria-label="Ellipse"><svg class="ic"><use href="#ell"/></svg></button></div>
    <i class="vsep"></i>
    <div class="rcol pl9"><button class="rb" aria-label="Line"><svg class="ic"><use href="#ln"/></svg></button><button class="rb" aria-label="Spline"><svg class="ic"><use href="#spl"/></svg></button><button class="rb" aria-label="Centre arc"><svg class="ic"><use href="#arcc"/></svg></button></div>
    <div class="rcol"><button class="rb" aria-label="Three point arc"><svg class="ic"><use href="#arc3"/></svg></button><button class="rb" aria-label="Equation curve"><svg class="ic"><use href="#eqn"/></svg></button></div>
    <i class="vsep"></i>
    <div class="rcol pl8"><button class="rb" aria-label="Region"><svg class="ic"><use href="#regn"/></svg></button><button class="rb" aria-label="Point"><svg class="ic"><use href="#pnt"/></svg></button><button class="rb" aria-label="Plane"><svg class="ic"><use href="#plane"/></svg></button></div>
  </div>
  <div class="grp g-edit">
    <div class="rcol pl9"><button class="rb dis"><svg class="ic"><use href="#mv"/></svg>Move</button><button class="rb dis"><svg class="ic"><use href="#ro"/></svg>Rotate</button><button class="rb dis"><svg class="ic"><use href="#mi"/></svg>Mirror</button></div>
    <i class="vsep"></i>
    <div class="rcol pl8"><button class="rb dis"><svg class="ic"><use href="#mv2"/></svg>Along Line</button><button class="rb dis"><svg class="ic"><use href="#ro2"/></svg>Around Axis</button><button class="rb dis"><svg class="ic"><use href="#mi2"/></svg>Thru Mirror</button></div>
    <i class="vsep"></i>
    <div class="rcol pl8"><button class="rb dis"><svg class="ic"><use href="#uni"/></svg>Unite</button><button class="rb dis"><svg class="ic"><use href="#subt"/></svg>Subtract</button><button class="rb dis"><svg class="ic"><use href="#inter"/></svg>Intersect</button></div>
    <div class="rcol"><button class="rb dis"><svg class="ic"><use href="#split"/></svg>Split</button><button class="rb dis"><svg class="ic"><use href="#impr"/></svg>Imprint</button></div>
    <i class="vsep"></i>
    <div class="rcol pl8"><button class="rb dis" aria-label="Sweep along vector"><svg class="ic"><use href="#sw1"/></svg></button><button class="rb dis" aria-label="Sweep around axis"><svg class="ic"><use href="#sw2"/></svg></button><button class="rb dis" aria-label="Sweep along path"><svg class="ic"><use href="#sw3"/></svg></button></div>
    <i class="vsep"></i>
    <div class="rcol pl8"><button class="rb dis"><svg class="ic"><use href="#fil"/></svg>Fillet</button><button class="rb dis"><svg class="ic"><use href="#cha"/></svg>Chamfer</button></div>
    <i class="vsep"></i>
    <div class="rcol pl8"><button class="rb caret"><svg class="ic"><use href="#surf"/></svg>Surface</button><button class="rb caret"><svg class="ic"><use href="#sheet"/></svg>Sheet</button><button class="rb caret"><svg class="ic"><use href="#edge"/></svg>Edge</button></div>
    <i class="vsep"></i>
    <div class="rcol pl8"><button class="rb caret"><svg class="ic"><use href="#rcs"/></svg>Relative CS</button><button class="rb dis"><svg class="ic"><use href="#fcs"/></svg>Face CS</button><button class="rb dis caret"><svg class="ic"><use href="#ocs"/></svg>Object CS</button></div>
  </div>
  <div class="grp g-meas"><div class="rcol pbox"><button class="rb caret ps-1"><svg class="ic"><use href="#meas"/></svg>Measure</button><button class="rb on px-1"><svg class="ic"><use href="#ruler"/></svg>Ruler</button><button class="rb ps-1">Units</button></div></div>
  <div class="grp g-grid"><div class="rcol pbox"><button class="rb on px-1"><svg class="ic"><use href="#gridi"/></svg>Grid</button><span class="pick w-100"><select aria-label="Grid plane"><option>In Plane</option></select></span></div></div>
  <div class="grp g-snap">
    <button class="on" aria-label="Snap grid"><svg class="ic"><use href="#sn1"/></svg></button><button class="on" aria-label="Snap centre"><svg class="ic"><use href="#sn2"/></svg></button>
    <button class="on" aria-label="Snap vertex"><svg class="ic"><use href="#sn3"/></svg></button><button class="on" aria-label="Snap edge"><svg class="ic"><use href="#sn4"/></svg></button>
    <button class="on" aria-label="Snap edge centre"><svg class="ic"><use href="#sn5"/></svg></button><button aria-label="Snap quadrant"><svg class="ic"><use href="#sn6"/></svg></button>
  </div>
  <div class="grp g-mat"><div class="rcol pbox"><span class="pick w-100"><select aria-label="Object type"><option>Model</option></select></span><span class="pick w-100"><select aria-label="Material name"><option>vacuum</option></select></span><button class="rb dis ps-1"><svg class="ic"><use href="#stk"/></svg>Material</button></div></div>
</section>

<div class="rtabs d-flex align-items-start">
  <button>Desktop</button><button>View</button><button class="sel">Draw</button><button>Model</button><button>Simulation</button><button>Results</button><button>Automation</button><button>Ansys Minerva</button>
  <span class="flex-fill"></span>
  <button class="p-0 me-2" aria-label="Help"><svg width="14" height="16"><use href="#help"/></svg></button><button class="p-0 me-1" aria-label="Ansys"><svg class="ic"><use href="#alogo"/></svg></button>
</div>

<main class="dock d-flex flex-fill">
  <aside class="side d-flex flex-column flex-shrink-0">
    <div class="phead d-flex align-items-center"><span class="ttl">Project Manager</span><svg class="ic"><use href="#pin"/></svg><svg class="ic"><use href="#x"/></svg></div>
    <div class="bg-white flex-fill overflow-hidden">
      <ul class="tree t-proj">
        <li><div class="row-t"><button class="tg" aria-label="Collapse"></button><svg class="ic"><use href="#prj"/></svg><span class="fw-bold">Project1*</span></div>
        <ul>
          <li><div class="row-t"><button class="tg" aria-label="Collapse"></button><svg class="ic"><use href="#dsn"/></svg><span class="fw-bold">Maxwell2DDesign1 (Transient, about Z)</span></div>
          <ul>
            <li><div class="row-t"><i class="leaf"></i><svg class="ic"><use href="#c3d"/></svg><span>3D Components</span></div></li>
            <li><div class="row-t"><i class="leaf"></i><svg class="ic"><use href="#mdl"/></svg><span>Model</span></div></li>
            <li><div class="row-t"><i class="leaf"></i><svg class="ic"><use href="#bnd"/></svg><span>Boundaries</span></div></li>
            <li><div class="row-t"><i class="leaf"></i><svg class="ic"><use href="#exc"/></svg><span>Excitations</span></div></li>
            <li><div class="row-t"><i class="leaf"></i><svg class="ic"><use href="#par"/></svg><span>Parameters</span></div></li>
            <li><div class="row-t"><i class="leaf"></i><svg class="ic"><use href="#msh"/></svg><span>Mesh</span></div></li>
            <li><div class="row-t"><i class="leaf"></i><svg class="ic"><use href="#ana"/></svg><span>Analysis</span></div></li>
            <li><div class="row-t"><i class="leaf"></i><svg class="ic"><use href="#opt"/></svg><span>Optimetrics</span></div></li>
            <li><div class="row-t"><i class="leaf"></i><svg class="ic"><use href="#res"/></svg><span>Results</span></div></li>
            <li><div class="row-t"><i class="leaf"></i><svg class="ic"><use href="#fld"/></svg><span>Field Overlays</span></div></li>
          </ul></li>
          <li><div class="row-t"><button class="tg" aria-label="Collapse"></button><svg class="ic"><use href="#fol"/></svg><span>Definitions</span></div>
          <ul>
            <li><div class="row-t"><i class="leaf"></i><svg class="ic"><use href="#fol"/></svg><span>Components</span></div></li>
            <li><div class="row-t"><i class="leaf"></i><svg class="ic"><use href="#fol"/></svg><span>Symbols</span></div></li>
            <li><div class="row-t"><i class="leaf"></i><svg class="ic"><use href="#fol"/></svg><span>Footprints</span></div></li>
            <li><div class="row-t"><i class="leaf"></i><svg class="ic"><use href="#fol"/></svg><span>Padstacks</span></div></li>
            <li><div class="row-t"><i class="leaf"></i><svg class="ic"><use href="#fol"/></svg><span>Models</span></div></li>
            <li><div class="row-t"><i class="leaf"></i><svg class="ic"><use href="#fol"/></svg><span>Packages</span></div></li>
            <li><div class="row-t"><i class="leaf"></i><svg class="ic"><use href="#fol"/></svg><span>Bondwires</span></div></li>
            <li><div class="row-t"><button class="tg" aria-label="Collapse"></button><svg class="ic"><use href="#fol"/></svg><span>Materials</span></div>
            <ul>
              <li><div class="row-t"><i class="leaf"></i><svg class="ic"><use href="#prj"/></svg><span class="hl">air</span></div></li>
              <li><div class="row-t"><i class="leaf"></i><svg class="ic"><use href="#prj"/></svg><span>copper</span></div></li>
              <li><div class="row-t"><i class="leaf"></i><svg class="ic"><use href="#prj"/></svg><span>steel_1008</span></div></li>
              <li><div class="row-t"><i class="leaf"></i><svg class="ic"><use href="#prj"/></svg><span>vacuum</span></div></li>
            </ul></li>
            <li><div class="row-t"><i class="leaf"></i><svg class="ic"><use href="#fol"/></svg><span>Surface Materials</span></div></li>
            <li><div class="row-t"><i class="leaf"></i><svg class="ic"><use href="#fol"/></svg><span>Scripts</span></div></li>
          </ul></li>
        </ul></li>
      </ul>
    </div>
    <div class="hscroll"><div class="thumb"></div></div>
    <div class="tabstrip d-flex align-items-start"><button class="text-white">Properties</button><button class="ptab">Project Manager</button></div>
  </aside>

  <div class="work d-flex flex-column flex-fill">
    <div class="dock d-flex flex-fill">
      <div class="mtree sunk d-flex flex-shrink-0"><div class="in flex-fill">
        <ul class="tree t-model">
          <li><div class="row-t"><button class="tg" aria-label="Collapse"></button><svg class="ic"><use href="#mdl"/></svg><span>Model</span></div>
          <ul><li><div class="row-t"><button class="tg" aria-label="Collapse"></button><svg class="ic"><use href="#shp"/></svg><span>Sheets</span></div>
            <ul>
              <li><div class="row-t"><button class="tg" aria-label="Collapse"></button><svg class="ic"><use href="#stk"/></svg><span>copper</span></div>
              <ul><li><div class="row-t"><button class="tg" aria-label="Collapse"></button><svg class="ic"><use href="#shp"/></svg><span>coil_1</span></div>
                <ul><li><div class="row-t"><i class="leaf"></i><svg class="ic"><use href="#crc"/></svg><span>CreateRectangle</span></div></li><li><div class="row-t"><i class="leaf"></i><svg class="ic"><use href="#cov"/></svg><span>CoverLines</span></div></li></ul></li></ul></li>
              <li><div class="row-t"><button class="tg" aria-label="Collapse"></button><svg class="ic"><use href="#stk"/></svg><span>steel_1008</span></div>
              <ul><li><div class="row-t"><button class="tg" aria-label="Collapse"></button><svg class="ic"><use href="#shp"/></svg><span>egg</span></div>
                <ul><li><div class="row-t"><i class="leaf"></i><svg class="ic"><use href="#crc"/></svg><span>CreateRectangle</span></div></li><li><div class="row-t"><i class="leaf"></i><svg class="ic"><use href="#cov"/></svg><span>CoverLines</span></div></li></ul></li></ul></li>
              <li><div class="row-t"><button class="tg" aria-label="Collapse"></button><svg class="ic"><use href="#stk"/></svg><span>vacuum</span></div>
              <ul><li><div class="row-t"><button class="tg" aria-label="Collapse"></button><svg class="ic"><use href="#shp"/></svg><span class="foc">Region</span></div>
                <ul><li><div class="row-t"><i class="leaf"></i><svg class="ic"><use href="#regt"/></svg><span>CreateRegion</span></div></li></ul></li></ul></li>
            </ul></li></ul></li>
          <li><div class="row-t"><button class="tg plus" aria-label="Expand"></button><svg class="ic"><use href="#csy"/></svg><span>Coordinate Systems</span></div></li>
          <li><div class="row-t"><button class="tg plus" aria-label="Expand"></button><svg class="ic"><use href="#pln"/></svg><span>Planes</span></div></li>
          <li><div class="row-t"><button class="tg plus" aria-label="Expand"></button><svg class="ic"><use href="#lst"/></svg><span>Lists</span></div></li>
        </ul>
      </div></div>
      <div class="gap-bar"></div>
      <div class="sunk d-flex flex-fill"><div class="in flex-fill position-relative">
        <svg class="scene w-100 h-100" viewBox="501 152 1261 772" preserveAspectRatio="xMinYMin meet" font-size="12">
          <g shape-rendering="crispEdges" fill="none">
            <path id="minor" stroke="#dadae5"/><path id="major" stroke="#c4c4da"/><path stroke="#b4bcd4" d="M508 806.500h1240"/>
            <path fill="#b4b4b4" stroke="#555" d="M1042.500 466.500h37v340h-37z"/>
            <path fill="#f00000" stroke="#600000" d="M1103.500 235.500h122v316h-122z"/>
            <path stroke="#cc4fcc" stroke-width="3" d="M1042.500 152v314M1042.500 811v113M1589.500 152v772"/>
            <path stroke="#9a289a" d="M1042.500 152v314M1042.500 811v113M1589.500 152v772"/>
            <path stroke="#9a6a9a" stroke-width="3" d="M1042.500 466v268"/>
            <path fill="#fff" stroke="#000" d="M882.500 889.500h498v7h-498z"/><path fill="#000" d="M1131 889h250v8h-250z"/>
            <path stroke="#b060b0" stroke-width="3" d="M1042.500 888v9"/>
          </g>
          <path stroke="#18b8a8" stroke-width="2" d="M1043 746v60"/><path fill="#3a78e0" d="M1043 731l5 15h-10z"/><path fill="#20c8e0" d="M1043 731l2 15h-4z"/>
          <path stroke="#b01818" stroke-width="2" d="M1043 806h60"/><path fill="#f00808" d="M1120 806l-17-5v10z"/>
          <circle cx="1043" cy="806" r="4.500" fill="#129a22"/><circle cx="1043" cy="806" r="2.500" fill="#222"/>
          <g font-size="16"><text x="1043" y="711" fill="#4466cc">Z</text><text x="1044" y="805" fill="#1e8a1e">Y</text><text x="1138" y="805" fill="#e01010">X</text></g>
          <g fill="#4a74e4"><circle cx="566.500" cy="846" r="5"/><circle cx="566.500" cy="871" r="5"/><path d="M565 824h3v14h-3zM566.500 814l3 13h-6z"/></g>
          <g fill="#e81010"><circle cx="554" cy="858.500" r="5"/><circle cx="579" cy="858.500" r="5"/><path d="M587 857h11v3h-11zM610 858.500l-13 3.500v-7z"/></g>
          <path fill="#888" d="M578 844l3 3-3 3-3-3z"/><path fill="#fff" stroke="#c8d4dc" d="M555.500 847.500h22v22h-22z"/><circle cx="566.500" cy="858.500" r="5.500" fill="#0c9a14"/>
          <text x="562" y="815" font-size="11" fill="#4466cc">Z</text><text x="611" y="865" font-size="11" fill="#e01010">X</text>
          <path fill="#bbb" d="M513 896h64v27h-64z"/><path fill="#eee" stroke="#000" stroke-width="2" d="M507 891h64v27h-64z"/>
          <text x="539" y="912" text-anchor="middle">Time = -1</text>
          <g text-anchor="middle"><text x="882" y="918">0</text><text x="1131" y="918">20</text><text x="1397" y="918">40 (mm)</text></g>
          <text x="1713" y="177" font-size="13" font-weight="bold" fill="#444">Ansys</text>
        </svg>
        <div class="tip">Region</div>
      </div></div>
      <aside class="lib d-flex flex-column flex-shrink-0">
        <div class="phead d-flex align-items-center"><span class="ttl">Component Librar...</span><svg class="ic"><use href="#pin"/></svg><svg class="ic"><use href="#x"/></svg></div>
        <div class="libframe d-flex flex-column flex-fill">
          <div class="libtree flex-fill overflow-hidden"><ul class="tree t-model">
            <li><div class="row-t"><i class="leaf"></i><svg class="ic"><use href="#cmp"/></svg><span class="hl">Favorites</span></div></li>
            <li><div class="row-t"><i class="leaf"></i><svg class="ic"><use href="#cmp"/></svg><span>Most Recently Used</span></div></li>
          </ul></div>
          <div class="hscroll narrow"><div class="thumb"></div></div>
        </div>
        <div class="libfoot d-flex align-items-start"><button class="libtab">Components</button><div class="libedge flex-fill"></div></div>
      </aside>
    </div>
    <div class="hsplit"></div>
    <div class="bottom d-flex">
      <section class="flex-fill bg-white">
        <div class="phead d-flex align-items-center"><span class="ttl">Message Manager</span><svg class="ic"><use href="#pin"/></svg><svg class="ic"><use href="#x"/></svg></div>
        <ul class="tree t-msg solo">
          <li><div class="row-t"><button class="tg" aria-label="Collapse"></button><svg class="ic"><use href="#prj"/></svg><span>Project1 (C:/ansys electronics projects/lab/)</span></div>
          <ul><li><div class="row-t"><button class="tg plus" aria-label="Expand"></button><svg class="ic"><use href="#dsn"/></svg><span class="hl">Maxwell2DDesign1 (Transient, about Z)</span></div></li></ul></li>
        </ul>
      </section>
      <section class="progress-pane bg-white">
        <div class="phead d-flex align-items-center"><span class="ttl">Progress</span><svg class="ic"><use href="#pin"/></svg><svg class="ic"><use href="#x"/></svg></div>
      </section>
    </div>
  </div>
</main>

<footer class="status d-flex align-items-center">
  <span class="flex-fill">Nothing is selected</span>
  <div class="stbtns d-flex"><button class="stbtn"><svg width="12" height="14"><use href="#warn"/></svg>Hide 5 Messages</button><button class="stbtn"><svg width="12" height="14"><use href="#prg"/></svg>Hide Progress</button></div>
</footer>
<div class="strip"></div>

<script>
// Grid lines: every fifth one is a major line.
const step = 24.28, minor = [], major = [];
for (let i = 0; i <= 51; i++) ((i - 2) % 5 ? minor : major).push(`M${Math.floor(508.9 + step * i) + .5} 175v728`);
for (let j = 0; j <= 30; j++) ((j - 1) % 5 ? minor : major).push(`M508 ${Math.floor(175.1 + step * j) + .5}h1240`);
document.getElementById('minor').setAttribute('d', minor.join(''));
document.getElementById('major').setAttribute('d', major.join(''));
</script>
</body>
</html>
